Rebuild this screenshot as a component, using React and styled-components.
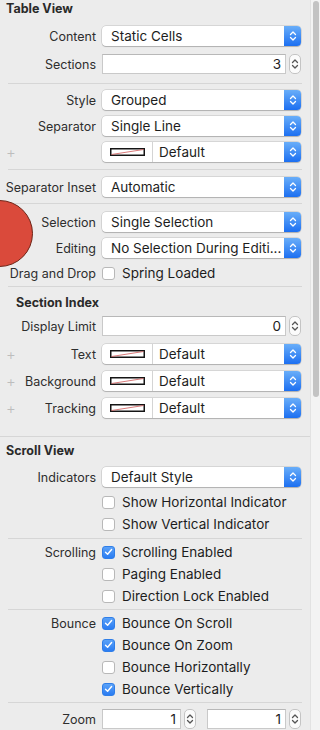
import React from 'react';
import styled, { createGlobalStyle } from 'styled-components';

const GlobalStyle = createGlobalStyle`
  html, body {
    margin: 0;
    padding: 0;
    background: #ececec;
  }
  body {
    font-family: Inter, "Noto Sans", sans-serif;
    font-size: 12.5px;
    color: #222;
  }
`;

const Page = styled.div`
  display: flex;
  width: 320px;
  height: 730px;
  overflow: hidden;
  position: relative;
`;

const Panel = styled.div`
  width: 310px;
  flex: none;
`;

const ScrollTrack = styled.div`
  width: 10px;
  flex: none;
  background: #f3f3f3;
  border-left: 1px solid #e2e2e2;
  box-sizing: border-box;
  padding: 1px 1px 0 2px;
`;

const ScrollThumb = styled.div`
  width: 6px;
  height: 396px;
  border-radius: 3px;
  background: #c3c3c3;
`;

const Heading = styled.div`
  height: 18px;
  line-height: 18px;
  font-weight: 700;
  font-size: 12.5px;
  color: #2a2a2a;
  padding-left: ${p => p.$indent || 6}px;
  margin-top: ${p => p.$mt || 0}px;
`;

const Row = styled.div`
  display: grid;
  grid-template-columns: 96px 199px;
  column-gap: 6px;
  align-items: center;
  height: ${p => p.$h || 20}px;
  margin-top: ${p => p.$mt || 0}px;
`;

const Label = styled.div`
  display: flex;
  align-items: center;
  justify-content: flex-end;
  white-space: nowrap;
  color: #2e2e2e;
`;

const Plus = styled.span`
  margin-right: auto;
  padding-left: 6px;
  color: #bdbdbd;
  font-size: 15px;
  font-weight: 300;
  line-height: 1;
`;

const Divider = styled.div`
  height: 1px;
  background: #d6d6d6;
  margin: ${p => p.$mt || 0}px ${p => (p.$full ? 0 : 8)}px 0 ${p => (p.$full ? 0 : 8)}px;
`;

const PopupBox = styled.div`
  display: flex;
  align-items: center;
  height: 20px;
  background: #fff;
  border-radius: 4px;
  box-shadow: 0 0 0 0.5px rgba(0, 0, 0, 0.18), 0 1px 1px rgba(0, 0, 0, 0.18);
  overflow: hidden;
`;

const PopupText = styled.span`
  flex: 1;
  min-width: 0;
  padding-left: ${p => p.$pl || 9}px;
  white-space: nowrap;
  overflow: hidden;
  font-size: 13.5px;
  color: #1d1d1d;
`;

const Arrows = styled.div`
  width: 17px;
  height: 20px;
  display: flex;
  align-items: center;
  justify-content: center;
  background: linear-gradient(#69aef9, #1c6ff1);
  flex: none;
`;

const WellSep = styled.div`
  width: 1px;
  height: 20px;
  background: #d4d4d4;
  margin-left: 7px;
  flex: none;
`;

const NumberGroup = styled.div`
  display: flex;
  align-items: center;
  gap: 3px;
`;

const NumberField = styled.div`
  flex: 1;
  height: 20px;
  box-sizing: border-box;
  background: #fff;
  border: 1px solid #c9c9c9;
  border-top-color: #b8b8b8;
  text-align: right;
  padding-right: 4px;
  line-height: 18px;
  font-size: 13.5px;
  color: #1d1d1d;
`;

const Stepper = styled.div`
  width: 12px;
  height: 20px;
  box-sizing: border-box;
  border: 1px solid #c4c4c4;
  border-radius: 5px;
  background: #fbfbfb;
  display: flex;
  align-items: center;
  justify-content: center;
  flex: none;
`;

const ZoomPair = styled.div`
  display: grid;
  grid-template-columns: 1fr 1fr;
  column-gap: 11px;
`;

const CheckLine = styled.div`
  display: flex;
  align-items: center;
  gap: 7px;
  white-space: nowrap;
  font-size: 13.5px;
  color: #1d1d1d;
`;

const Box = styled.div`
  width: 13px;
  height: 13px;
  box-sizing: border-box;
  border-radius: 3px;
  flex: none;
  display: flex;
  align-items: center;
  justify-content: center;
  background: ${p => (p.$on ? 'linear-gradient(#5ba2f8, #2a7cf2)' : '#fff')};
  border: 1px solid ${p => (p.$on ? '#2f7ee8' : '#b8b8b8')};
`;

const RedDot = styled.div`
  position: absolute;
  left: -34px;
  top: 200px;
  width: 67px;
  height: 67px;
  box-sizing: border-box;
  border-radius: 50%;
  background: #da4a3b;
  border: 1.5px solid #6e2417;
`;

const Chevrons = ({ color = '#fff' }) => (
  <svg width="8" height="12" viewBox="0 0 8 12">
    <path d="M1.5 4.5 L4 2 L6.5 4.5 M1.5 7.5 L4 10 L6.5 7.5" fill="none" stroke={color} strokeWidth="1.3" strokeLinecap="round" strokeLinejoin="round" />
  </svg>
);

const Well = () => (
  <svg width="35" height="8" viewBox="0 0 35 8" style={{ marginLeft: 8, flex: 'none' }}>
    <rect x="0.75" y="0.75" width="33.5" height="6.5" fill="#fff" stroke="#151515" strokeWidth="1.5" />
    <line x1="1.5" y1="6.5" x2="33.5" y2="1.5" stroke="#d46a6a" strokeWidth="0.9" />
  </svg>
);

const Popup = ({ value }) => (
  <PopupBox>
    <PopupText>{value}</PopupText>
    <Arrows><Chevrons /></Arrows>
  </PopupBox>
);

const ColorPopup = () => (
  <PopupBox>
    <Well />
    <WellSep />
    <PopupText $pl={6}>Default</PopupText>
    <Arrows><Chevrons /></Arrows>
  </PopupBox>
);

const NumberInput = ({ value }) => (
  <NumberGroup>
    <NumberField>{value}</NumberField>
    <Stepper><Chevrons color="#555" /></Stepper>
  </NumberGroup>
);

const Check = ({ on, text }) => (
  <CheckLine>
    <Box $on={on}>
      {on && (
        <svg width="9" height="8" viewBox="0 0 9 8">
          <path d="M1.5 4.2 L3.6 6.3 L7.6 1.5" fill="none" stroke="#fff" strokeWidth="1.4" strokeLinecap="round" strokeLinejoin="round" />
        </svg>
      )}
    </Box>
    {text}
  </CheckLine>
);

const CheckRow = ({ label, on, text, mt }) => (
  <Row $h={22} $mt={mt}>
    <Label>{label}</Label>
    <Check on={on} text={text} />
  </Row>
);

const App = () => (
  <Page>
    <GlobalStyle />
    <Panel>
      <Heading>Table View</Heading>
      <Row $mt={8}><Label>Content</Label><Popup value="Static Cells" /></Row>
      <Row $mt={8}><Label>Sections</Label><NumberInput value="3" /></Row>
      <Divider $mt={9} />
      <Row $mt={6}><Label>Style</Label><Popup value="Grouped" /></Row>
      <Row $mt={6}><Label>Separator</Label><Popup value="Single Line" /></Row>
      <Row $mt={6}><Label><Plus>+</Plus></Label><ColorPopup /></Row>
      <Divider $mt={7} />
      <Row $mt={7}><Label>Separator Inset</Label><Popup value="Automatic" /></Row>
      <Divider $mt={6} />
      <Row $mt={8}><Label>Selection</Label><Popup value="Single Selection" /></Row>
      <Row $mt={6}><Label>Editing</Label><Popup value="No Selection During Editi..." /></Row>
      <CheckRow mt={4} label="Drag and Drop" text="Spring Loaded" />
      <Divider $mt={2} />

      <Heading $indent={16} $mt={7}>Section Index</Heading>
      <Row $mt={4}><Label>Display Limit</Label><NumberInput value="0" /></Row>
      <Row $mt={8}><Label><Plus>+</Plus>Text</Label><ColorPopup /></Row>
      <Row $mt={7}><Label><Plus>+</Plus>Background</Label><ColorPopup /></Row>
      <Row $mt={7}><Label><Plus>+</Plus>Tracking</Label><ColorPopup /></Row>
      <Divider $full $mt={18} />

      <Heading $mt={5}>Scroll View</Heading>
      <Row $mt={7}><Label>Indicators</Label><Popup value="Default Style" /></Row>
      <CheckRow mt={4} text="Show Horizontal Indicator" />
      <CheckRow text="Show Vertical Indicator" />
      <Divider $mt={3} />
      <CheckRow mt={2} label="Scrolling" on text="Scrolling Enabled" />
      <CheckRow text="Paging Enabled" />
      <CheckRow text="Direction Lock Enabled" />
      <Divider $mt={2} />
      <CheckRow mt={2} label="Bounce" on text="Bounce On Scroll" />
      <CheckRow on text="Bounce On Zoom" />
      <CheckRow text="Bounce Horizontally" />
      <CheckRow on text="Bounce Vertically" />
      <Divider $mt={2} />
      <Row $mt={6}>
        <Label>Zoom</Label>
        <ZoomPair>
          <NumberInput value="1" />
          <NumberInput value="1" />
        </ZoomPair>
      </Row>
    </Panel>
    <ScrollTrack><ScrollThumb /></ScrollTrack>
    <RedDot />
  </Page>
);

export default App;
